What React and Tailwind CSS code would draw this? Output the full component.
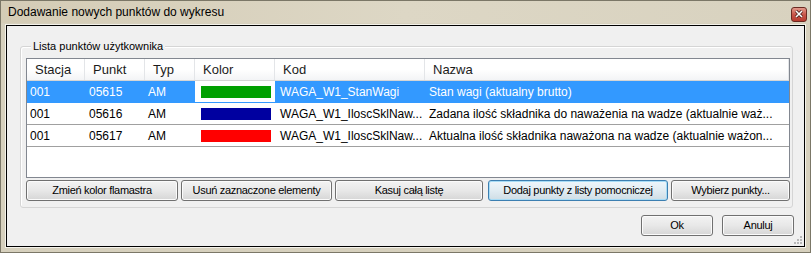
const rows = [
    { st: '001', pt: '05615', typ: 'AM', color: 'bg-[#00a000]', kod: 'WAGA_W1_StanWagi', nazwa: 'Stan wagi (aktualny brutto)', sel: true },
    { st: '001', pt: '05616', typ: 'AM', color: 'bg-[#0000a0]', kod: 'WAGA_W1_IloscSklNaw...', nazwa: 'Zadana ilość składnika do naważenia na wadze (aktualnie waż...' },
    { st: '001', pt: '05617', typ: 'AM', color: 'bg-[#ff0000]', kod: 'WAGA_W1_IloscSklNaw...', nazwa: 'Aktualna ilość składnika naważona na wadze (aktualnie ważon...' },
];

const cols = 'grid grid-cols-[58px_60px_50px_80px_150px_1fr]';

function Btn({ w, children, focused }) {
    return (
        <button
            className={
                'h-[21px] shrink-0 rounded-[3px] border text-[11px] tracking-[-0.3px] text-black leading-none ' +
                w +
                (focused
                    ? ' border-[#3c7fb1] bg-gradient-to-b from-[#eef6fb] via-[#e1ecf2] to-[#cfdde5] shadow-[inset_0_0_0_1px_#a7dcf6]'
                    : ' border-[#707070] bg-gradient-to-b from-[#f3f3f3] via-[#e8e8e8] to-[#d6d6d6] shadow-[inset_0_0_0_1px_#fbfbfb]')
            }
        >
            {children}
        </button>
    );
}

export default function App() {
    return (
        <div className="w-[811px] h-[253px] border border-[#7b7767] bg-[#d6d0bd] flex flex-col font-['Liberation_Sans',Arial,sans-serif] overflow-hidden">
            {/* Pasek tytułu */}
            <div className="h-[22px] shrink-0 flex items-center justify-between pl-[7px] pr-[3px] bg-gradient-to-r from-[#d4ccb6] via-[#ddd7c5] to-[#d8d2bf]">
                <span className="text-[12px] text-black">Dodawanie nowych punktów do wykresu</span>
                <div className="w-[16px] h-[15px] mt-[4px] rounded-[3px] border border-[#6b2a22] bg-gradient-to-b from-[#e39a8c] via-[#c8564a] to-[#b73a2e] flex items-center justify-center">
                    <svg width="8" height="8" viewBox="0 0 8 8">
                        <path d="M1 1 L7 7 M7 1 L1 7" stroke="#3b1410" strokeWidth="3" />
                        <path d="M1 1 L7 7 M7 1 L1 7" stroke="#ffffff" strokeWidth="1.6" />
                    </svg>
                </div>
            </div>

            {/* Obszar okna */}
            <div className="mx-[4px] mt-[1px] h-[224px] border border-[#f4f2ea]">
                <div className="h-full border border-black bg-[#f0f0f0] flex flex-col pt-[20px] relative">
                    {/* Grupa */}
                    <div className="relative ml-[13px] mr-[11px] h-[162px] border border-[#d5d5d5] rounded-[3px] shadow-[inset_1px_1px_0_#ffffff] pt-[11px] pl-[5px] pr-[2px]">
                        <span className="absolute left-[10px] top-[-8px] px-[2px] bg-[#f0f0f0] text-[11px] text-black leading-[14px]">
                            Lista punktów użytkownika
                        </span>

                        {/* Lista */}
                        <div className="h-[120px] border border-[#828790] bg-white overflow-hidden">
                            <div className={cols + ' h-[22px] border-b border-[#d5d5d5] bg-gradient-to-b from-white via-white to-[#f3f4f6] text-[13px] text-[#1b1b1b]'}>
                                {['Stacja', 'Punkt', 'Typ', 'Kolor', 'Kod', 'Nazwa'].map((h) => (
                                    <div key={h} className="pl-[8px] flex items-center border-r border-[#e3e5e8]">
                                        {h}
                                    </div>
                                ))}
                            </div>
                            {rows.map((r, i) => (
                                <div
                                    key={i}
                                    className={
                                        cols +
                                        ' h-[22px] border-b text-[12px] ' +
                                        (r.sel ? 'bg-[#3399ff] text-white border-[#3399ff]' : 'text-black border-[#a0a0a0]')
                                    }
                                >
                                    <div className="pl-[3px] flex items-center">{r.st}</div>
                                    <div className="pl-[4px] flex items-center">{r.pt}</div>
                                    <div className="pl-[3px] flex items-center">{r.typ}</div>
                                    <div className={'flex items-center pl-[6px] pr-[4px] ' + (r.sel ? 'bg-white' : '')}>
                                        <div className={'h-[12px] w-full ' + r.color}></div>
                                    </div>
                                    <div className="pl-[5px] flex items-center whitespace-nowrap overflow-hidden">{r.kod}</div>
                                    <div className="pl-[4px] flex items-center whitespace-nowrap overflow-hidden">{r.nazwa}</div>
                                </div>
                            ))}
                        </div>

                        {/* Przyciski listy */}
                        <div className="flex mt-[2px]">
                            <Btn w="w-[152px]">Zmień kolor flamastra</Btn>
                            <Btn w="w-[151px] ml-[3px]">Usuń zaznaczone elementy</Btn>
                            <Btn w="w-[148px] ml-[3px]">Kasuj całą listę</Btn>
                            <Btn w="w-[180px] ml-[5px]" focused>Dodaj punkty z listy pomocniczej</Btn>
                            <Btn w="w-[119px] ml-[3px]">Wybierz punkty...</Btn>
                        </div>
                    </div>

                    {/* Ok / Anuluj */}
                    <div className="flex justify-end gap-[9px] mt-[7px] mr-[10px]">
                        <Btn w="w-[72px]">Ok</Btn>
                        <Btn w="w-[72px]">Anuluj</Btn>
                    </div>

                    {/* Uchwyt zmiany rozmiaru */}
                    <div className="absolute right-[2px] bottom-[2px] grid grid-cols-3 gap-[1px]">
                        {[0, 0, 1, 0, 1, 1, 1, 1, 1].map((v, i) => (
                            <div key={i} className={'w-[2px] h-[2px] ' + (v ? 'bg-[#b8b8b8]' : '')}></div>
                        ))}
                    </div>
                </div>
            </div>
        </div>
    );
}
